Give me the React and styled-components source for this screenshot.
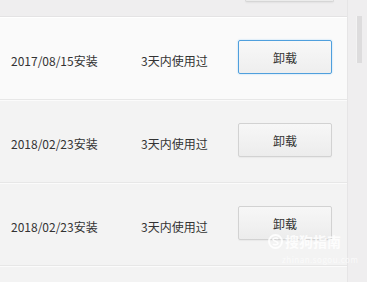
import React from "react";
import styled, { createGlobalStyle, css } from "styled-components";

const GlobalStyle = createGlobalStyle`
  html, body {
    margin: 0;
    padding: 0;
    background: #efeeef;
    font-family: "Noto Sans CJK SC", "Noto Sans", sans-serif;
  }
`;

const Page = styled.div`
  display: flex;
  width: 367px;
  height: 282px;
  overflow: hidden;
  background: #efeeef;
`;

const Main = styled.div`
  width: 347px;
  display: flex;
  flex-direction: column;
`;

const TopStrip = styled.div`
  height: 16px;
  flex-shrink: 0;
  display: flex;
  padding-left: 245px;
  border-bottom: 1px solid #e4e3e4;
`;

const ButtonTail = styled.div`
  width: 87px;
  height: 1px;
  border: 1px solid #d6d6d6;
  border-top: none;
  border-radius: 0 0 2px 2px;
  background: #ececec;
  box-shadow: 0 1px 2px rgba(0, 0, 0, 0.06);
`;

const List = styled.div`
  display: flex;
  flex-direction: column;
  flex: 1;
`;

const Row = styled.div`
  height: 81px;
  flex-shrink: 0;
  display: grid;
  grid-template-columns: 130px 97px 94px;
  align-items: center;
  padding-left: 11px;
  background: #f3f3f3;
  border-top: 1px solid #fbfbfb;
  border-bottom: 1px solid #e7e7e7;
  font-size: 12px;
  color: #333;
  position: relative;
  ${p =>
    p.hovered &&
    css`
      background: #fafafa;
      border-top-color: #ffffff;
    `}
`;

const Cell = styled.div`
  white-space: nowrap;
  padding-top: 4px;
`;

const UninstallButton = styled.button`
  width: 94px;
  height: 34px;
  margin-top: -3px;
  border: 1px solid #d2d2d2;
  border-radius: 2px;
  background: linear-gradient(#f7f7f7, #ececec);
  box-shadow: 0 1px 1px rgba(0, 0, 0, 0.04);
  font-family: inherit;
  font-size: 12px;
  color: #333;
  padding: 0;
  ${p =>
    p.focused &&
    css`
      border-color: #4f9fdd;
      background: linear-gradient(#f8f8f8, #eeeeee);
      box-shadow: 0 0 2px #a7d4f5;
    `}
`;

const FillerRow = styled.div`
  flex: 1;
  background: #f3f3f3;
  border-top: 1px solid #fbfbfb;
`;

const Watermark = styled.div`
  position: absolute;
  left: 268px;
  top: 47px;
  display: flex;
  flex-direction: column;
  gap: 3px;
  color: rgba(255, 255, 255, 0.85);
  pointer-events: none;
`;

const MarkLine = styled.div`
  display: flex;
  align-items: center;
  gap: 2px;
  font-size: 14px;
  font-weight: bold;
`;

const MarkUrl = styled.div`
  font-size: 8px;
  padding-left: 14px;
  letter-spacing: 0.5px;
  opacity: 0.8;
`;

const ScrollColumn = styled.div`
  width: 20px;
  display: flex;
  padding-top: 16px;
  padding-left: 8px;
  box-sizing: border-box;
  border-left: 1px solid #e6e5e6;
`;

const Thumb = styled.div`
  width: 5px;
  height: 47px;
  background: #dddcdd;
  border-left: 1px solid #f3f3f3;
`;

const SogouLogo = () => (
  <svg width="15" height="15" viewBox="0 0 15 15">
    <circle cx="7.5" cy="7.5" r="6.5" fill="none" stroke="rgba(255,255,255,0.85)" strokeWidth="2" />
    <path d="M10 5 C9 3.8 5 3.8 5 5.6 C5 7.4 10 7.2 10 9.2 C10 11 6 11.2 5 10" fill="none" stroke="rgba(255,255,255,0.85)" strokeWidth="1.6" />
  </svg>
);

const apps = [
  { date: "2017/08/15安装", used: "3天内使用过", active: true },
  { date: "2018/02/23安装", used: "3天内使用过" },
  { date: "2018/02/23安装", used: "3天内使用过", mark: true }
];

export default function App() {
  return (
    <Page>
      <GlobalStyle />
      <Main>
        <TopStrip>
          <ButtonTail />
        </TopStrip>
        <List>
          {apps.map((a, i) => (
            <Row key={i} hovered={a.active}>
              <Cell>{a.date}</Cell>
              <Cell>{a.used}</Cell>
              <UninstallButton focused={a.active}>卸载</UninstallButton>
              {a.mark && (
                <Watermark>
                  <MarkLine>
                    <SogouLogo />
                    搜狗指南
                  </MarkLine>
                  <MarkUrl>zhinan.sogou.com</MarkUrl>
                </Watermark>
              )}
            </Row>
          ))}
          <FillerRow />
        </List>
      </Main>
      <ScrollColumn>
        <Thumb />
      </ScrollColumn>
    </Page>
  );
}
